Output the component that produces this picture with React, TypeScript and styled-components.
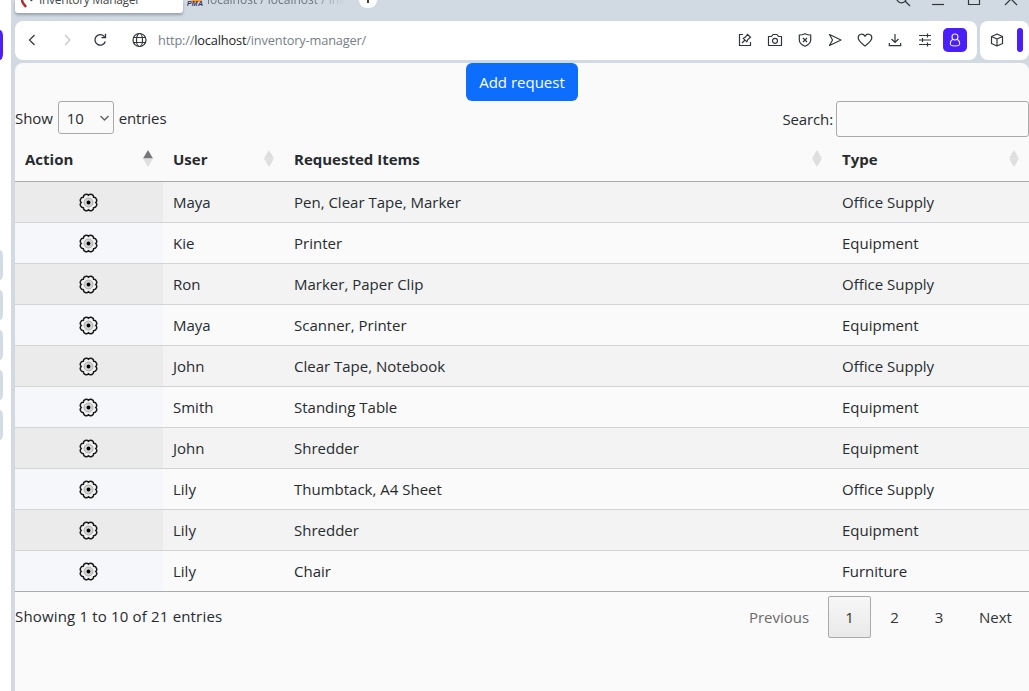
import React from 'react';
import styled, { createGlobalStyle, css } from 'styled-components';

const Global = createGlobalStyle`
  * { box-sizing: border-box; }
  html, body { margin: 0; height: 100%; overflow: hidden; }
  body { font-family: "Open Sans", "Noto Sans", sans-serif; font-size: 15px; color: #272b2f; background: #d1dae2; }
`;

const Window = styled.div`
  display: flex;
  width: 1029px;
  height: 691px;
  overflow: hidden;
  background: #d1dae2;
`;

const Sidebar = styled.aside`
  width: 11px;
  flex: none;
  background: #fff;
  padding-top: 30px;
`;

const SideTile = styled.div<{ $active?: boolean }>`
  width: 3px;
  height: 30px;
  margin-bottom: ${p => (p.$active ? 190 : 10)}px;
  border-radius: 0 3px 3px 0 / 0 6px 6px 0;
  background: ${p => (p.$active ? '#4a1ffb' : '#d3dce4')};
`;

const Browser = styled.div`
  display: flex;
  flex-direction: column;
  flex: 1;
  min-width: 0;
  padding-left: 4px;
`;

const TabStrip = styled.div`
  display: flex;
  align-items: flex-start;
  height: 21px;
  flex: none;
  font-size: 12px;
`;

const Tab = styled.div<{ $active?: boolean }>`
  display: flex;
  align-items: flex-end;
  height: 13px;
  width: ${p => (p.$active ? 168 : 163)}px;
  padding-left: ${p => (p.$active ? 6 : 4)}px;
  gap: ${p => (p.$active ? 4 : 3)}px;
  color: ${p => (p.$active ? '#44484c' : '#6c757d')};
  ${p => p.$active && css`
    background: #fff;
    border-radius: 0 0 3px 3px;
    box-shadow: 0 2px 3px rgba(60, 75, 90, 0.4);
  `}
`;

const TabTitle = styled.span<{ $width: number; $fade?: boolean }>`
  display: flex;
  align-items: flex-end;
  width: ${p => p.$width}px;
  height: 13px;
  padding-bottom: 5px;
  overflow: hidden;
  white-space: pre;
  line-height: 16px;
  letter-spacing: ${p => (p.$fade ? 0 : -0.3)}px;
  ${p => p.$fade && css`
    mask-image: linear-gradient(90deg, #000 75%, transparent);
  `}
`;

const NewTab = styled.div`
  display: flex;
  justify-content: center;
  width: 18px;
  height: 8px;
  margin-left: 13px;
  border-radius: 0 0 9px 9px;
  background: #fff;
`;

const WindowButtons = styled.div`
  display: flex;
  gap: 16px;
  margin-left: auto;
  padding-right: 9px;
`;

const Toolbar = styled.div`
  display: flex;
  gap: 3px;
  height: 39px;
  flex: none;
`;

const AddressBar = styled.div`
  display: flex;
  align-items: center;
  width: 962px;
  height: 39px;
  padding: 0 10px 1px 7px;
  background: #fff;
  border-radius: 8px;
`;

const NavGroup = styled.div`
  display: flex;
  gap: 14px;
  margin-right: 9px;
  svg:last-child { margin-left: 1px; overflow: visible; }
`;

const Address = styled.div`
  flex: 1;
  padding-left: 4px;
  font-size: 12.8px;
  line-height: 20px;
  letter-spacing: -0.18px;
  color: #777f86;
  strong { color: #202428; font-weight: 400; }
`;

const Actions = styled.div`
  display: flex;
  align-items: center;
  gap: 10px;
`;

const Profile = styled.div`
  display: flex;
  align-items: center;
  justify-content: center;
  width: 24px;
  height: 24px;
  margin-left: -2px;
  border-radius: 5px;
  background: #4a1ffb;
`;

const SidePanel = styled.div`
  display: flex;
  align-items: center;
  gap: 10px;
  width: 49px;
  padding: 0 0 1px 7px;
  border-radius: 8px;
  background: #fff;
`;

const PanelHandle = styled.div`
  width: 6px;
  height: 24px;
  border-radius: 3px;
  background: #4a1ffb;
`;

const Page = styled.main`
  flex: 1;
  margin-top: 3px;
  background: #fafafa;
  border-radius: 8px 8px 0 0;
`;

const AddRow = styled.div`
  display: flex;
  justify-content: center;
  height: 38px;
`;

const AddButton = styled.button`
  width: 112px;
  height: 38px;
  padding: 0 0 1px;
  border: 0;
  border-radius: 6px;
  background: #0d6efd;
  color: #fff;
  font: inherit;
`;

const Controls = styled.div`
  display: flex;
  justify-content: space-between;
  height: 39px;
`;

const LengthControl = styled.label`
  display: flex;
  align-items: center;
  gap: 5px;
  height: 34px;
  letter-spacing: -0.1px;
`;

const SelectBox = styled.span`
  display: flex;
  align-items: center;
  align-self: flex-start;
  justify-content: space-between;
  width: 56px;
  height: 33px;
  padding: 1px 3px 0 8px;
  border: 1px solid #aaa;
  border-radius: 3px;
`;

const SearchControl = styled.label`
  display: flex;
  align-items: center;
  gap: 3px;
  height: 36px;
  letter-spacing: -0.12px;
`;

const SearchInput = styled.input`
  width: 193px;
  height: 36px;
  border: 1px solid #aaa;
  border-radius: 3px;
  background: transparent;
`;

const Table = styled.table`
  width: 1014px;
  table-layout: fixed;
  border-collapse: separate;
  border-spacing: 0;
  border-bottom: 1px solid #aaa;
`;

const HeadCell = styled.th<{ $width: number }>`
  width: ${p => p.$width}px;
  height: 42px;
  padding: 0 10px 4px;
  border-bottom: 1px solid #aaa;
  text-align: left;
  font-weight: 700;
`;

const HeadInner = styled.div`
  display: flex;
  align-items: center;
  justify-content: space-between;
`;

const Row = styled.tr`
  td { background: #fafafa; border-bottom: 1px solid #d2d4d6; }
  td:first-child { background: #f5f7fb; }
  &:nth-child(odd) td { background: #f3f3f3; }
  &:nth-child(odd) td:first-child { background: #ebebeb; }
  &:last-child td { height: 40px; border-bottom: 0; }
`;

const Cell = styled.td`
  height: 41px;
  padding: 0 10px;
  line-height: 24px;
`;

const GearCell = styled(Cell)`
  padding: 0 11px 0 10px;
  svg { display: block; margin: 0 auto; }
`;

const Footer = styled.div`
  display: flex;
  justify-content: space-between;
  padding-top: 4px;
`;

const Info = styled.div`
  height: 42px;
  line-height: 41px;
  letter-spacing: 0.17px;
`;

const Pager = styled.div`
  display: flex;
  gap: 2px;
`;

const PageButton = styled.button<{ $width: number; $current?: boolean; $muted?: boolean }>`
  width: ${p => p.$width}px;
  height: 42px;
  padding: 0;
  border: 1px solid ${p => (p.$current ? '#aaa' : 'transparent')};
  border-radius: 2px;
  background: ${p => (p.$current ? 'linear-gradient(#f7f7f7, #e9e9e9)' : 'transparent')};
  color: ${p => (p.$muted ? '#6b6b6b' : '#333')};
  font: inherit;
`;

const Line = ({ size = 20, children, color = '#30363b', w = 1.2 }: { size?: number; children: React.ReactNode; color?: string; w?: number }) => (
  <svg width={size} height={size} viewBox={`0 0 ${size} ${size}`} fill="none" stroke={color} strokeWidth={w}>{children}</svg>
);

const Gear = () => {
  const points = Array.from({ length: 8 }, (_, i) => {
    const a = (i * 45 * Math.PI) / 180;
    return [9.5 + 7.3 * Math.cos(a), 9.5 + 7.3 * Math.sin(a)];
  });
  const d = points.map(([x, y], i) => {
    const [nx, ny] = points[(i + 1) % 8];
    return `${i ? '' : `M${x} ${y}`}A3 3 0 0 1 ${nx} ${ny}`;
  }).join('') + 'Z';
  return (
    <svg width="19" height="19" viewBox="0 0 19 19" fill="none">
      <path d={d} fill="#f2f2f2" stroke="#181818" strokeWidth="1.5" />
      <circle cx="9.5" cy="9.5" r="4.5" fill="#d2d2d2" stroke="#a0a0a0" strokeWidth=".8" />
      <circle cx="9.5" cy="9.5" r="1.9" fill="#000" />
    </svg>
  );
};

const Sort = ({ up }: { up?: boolean }) => (
  <svg width="10" height="17" viewBox="0 0 10 17">
    <path d="M0 8.5 5 0l5 8.5Z" fill={up ? '#77777a' : '#dedede'} />
    <path d="M0 8.5h10L5 17Z" fill="#dedede" />
  </svg>
);

const rows = [
  ['Maya', 'Pen, Clear Tape, Marker', 'Office Supply'],
  ['Kie', 'Printer', 'Equipment'],
  ['Ron', 'Marker, Paper Clip', 'Office Supply'],
  ['Maya', 'Scanner, Printer', 'Equipment'],
  ['John', 'Clear Tape, Notebook', 'Office Supply'],
  ['Smith', 'Standing Table', 'Equipment'],
  ['John', 'Shredder', 'Equipment'],
  ['Lily', 'Thumbtack, A4 Sheet', 'Office Supply'],
  ['Lily', 'Shredder', 'Equipment'],
  ['Lily', 'Chair', 'Furniture'],
];

const columns: [string, number][] = [['Action', 148], ['User', 121], ['Requested Items', 548], ['Type', 197]];

export default function App() {
  return (
    <>
      <Global />
      <Window>
        <Sidebar>
          <SideTile $active />
          {[0, 1, 2, 3, 4].map(i => <SideTile key={i} />)}
        </Sidebar>
        <Browser>
          <TabStrip>
            <Tab $active>
              <svg width="14" height="13" viewBox="0 0 14 13"><path d="M1 0c0 3 2 4 4 7" stroke="#b52b2b" strokeWidth="2.4" fill="none" /><path d="M9 0h3l-2 1.5Z" fill="#444" /></svg>
              <TabTitle $width={112}>Inventory Manager</TabTitle>
            </Tab>
            <Tab>
              <svg width="17" height="13" viewBox="0 0 17 13">
                <path d="M4 0h11l-1 2H5Z" fill="#f79a2b" />
                <text x="0" y="6.5" fontFamily="Liberation Sans" fontWeight="700" fontStyle="italic" fontSize="7" textLength="16" fill="#343461">PMA</text>
              </svg>
              <TabTitle $width={140} $fade>localhost / localhost / inventory</TabTitle>
            </Tab>
            <NewTab><Line size={8} w={1.6} color="#111"><path d="M4 0v3" /></Line></NewTab>
            <WindowButtons>
              <svg width="16" height="8" fill="none" stroke="#30363b" strokeWidth="1.3"><circle cx="5.5" cy="-2" r="4.8" /><path d="m9 1 5 5" /></svg>
              <svg width="20" height="8" stroke="#30363b" strokeWidth="1.2"><path d="M4 4.5h12" /></svg>
              <svg width="20" height="8" fill="none" stroke="#30363b" strokeWidth="1.2"><path d="M4.500 0v4.500h11V0" /></svg>
              <svg width="20" height="8" fill="none" stroke="#30363b" strokeWidth="1.2"><path d="m5 5 6-6 6 6" /></svg>
            </WindowButtons>
          </TabStrip>
          <Toolbar>
            <AddressBar>
              <NavGroup>
                <Line><path d="m12.500 5-5 5 5 5" /></Line>
                <Line color="#c0c4c8"><path d="m9 5 5 5-5 5" /></Line>
                <Line w={1.3}><path d="M14.600 6.800A5.300 5.300 0 1 0 15.300 11.500" /><path d="M15.500 3.800v3.900h-4" /></Line>
                <Line w={1.2}><g transform="translate(4.500 0)"><circle cx="10" cy="10" r="6.500" /><ellipse cx="10" cy="10" rx="3" ry="6.500" /><path d="M4.300 7.500h11.400M4.300 12.500h11.400" /></g></Line>
              </NavGroup>
              <Address>http://<strong>localhost</strong>/inventory-manager/</Address>
              <Actions>
                <Line><path d="M8 4.500H4.500v11h11V12" /><path d="m7 13 3-3M8.300 8.300l3.500 3.500 1-2.300 2.700-2.200-3-3-2 2.700Z" /></Line>
                <Line><path d="M3.500 6.500h3L8 4.500h4l1.500 2h3v9h-13Z" strokeLinejoin="round" /><circle cx="10" cy="10.800" r="2.500" /></Line>
                <Line><path d="M10 3.700c2 1 3.700 1.300 5.700 1.300v5c0 3-2.700 5-5.700 6.300C7 15 4.300 13 4.300 10V5c2 0 3.700-.3 5.700-1.300Z" /><path d="m8 8 4 4m0-4-4 4" /></Line>
                <Line><path d="m4.500 4.500 11.500 5.500-11.500 5.500L7.500 10Z" strokeLinejoin="round" /></Line>
                <Line><path d="M10 16C7 13.500 3.200 11 3.200 7.700c0-4 5-4.700 6.800-1.400 1.800-3.300 6.800-2.600 6.800 1.400C16.800 11 13 13.500 10 16Z" /></Line>
                <Line><path d="M10 4v8.500M6.500 9 10 12.500 13.500 9M4.300 13v2.700h11.400V13" /></Line>
                <Line><path d="M4 6h12M4 10.500h12M4 15h12M12.500 4v4M7.500 8.500v4M12.500 13v4" transform="translate(0 -.5)" /></Line>
                <Profile><Line size={18} color="#f1edff" w={1.100}><circle cx="9" cy="6" r="3" /><path d="M6.700 8.200C4.700 9.500 4.300 11 4.300 12.500c0 2 1 2.500 4.700 2.500s4.700-.5 4.700-2.500c0-1.500-.4-3-2.400-4.300" /></Line></Profile>
              </Actions>
            </AddressBar>
            <SidePanel>
              <Line><path d="m10 4 5.500 2.500v7L10 16l-5.500-2.500v-7ZM4.500 6.500 10 9l5.500-2.500M10 9v7" strokeLinejoin="round" /></Line>
              <PanelHandle />
            </SidePanel>
          </Toolbar>
          <Page>
            <AddRow><AddButton>Add request</AddButton></AddRow>
            <Controls>
              <LengthControl>
                <span>Show</span>
                <SelectBox>10<Line size={11} w={1.500} color="#666"><path d="m1.500 3 4 4 4-4" /></Line></SelectBox>
                <span>entries</span>
              </LengthControl>
              <SearchControl><span>Search:</span><SearchInput aria-label="Search" /></SearchControl>
            </Controls>
            <Table>
              <thead>
                <tr>{columns.map(([name, width], i) => (
                  <HeadCell key={name} $width={width}><HeadInner>{name}<Sort up={i === 0} /></HeadInner></HeadCell>
                ))}</tr>
              </thead>
              <tbody>
                {rows.map((r, i) => (
                  <Row key={i}>
                    <GearCell><Gear /></GearCell>
                    {r.map(text => <Cell key={text}>{text}</Cell>)}
                  </Row>
                ))}
              </tbody>
            </Table>
            <Footer>
              <Info>Showing 1 to 10 of 21 entries</Info>
              <Pager>
                <PageButton $width={94} $muted>Previous</PageButton>
                <PageButton $width={43} $current>1</PageButton>
                <PageButton $width={43}>2</PageButton>
                <PageButton $width={42}>3</PageButton>
                <PageButton $width={67}>Next</PageButton>
              </Pager>
            </Footer>
          </Page>
        </Browser>
      </Window>
    </>
  );
}
